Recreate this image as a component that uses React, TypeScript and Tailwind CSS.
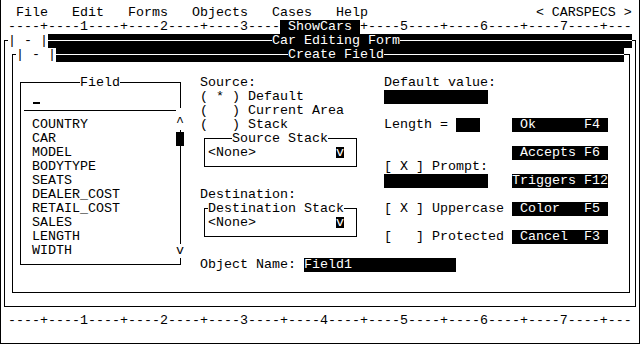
import type { ReactNode } from 'react'

// 80x24 text screen, 8x14 cells
const ruler = (from: number, to: number) => {
  let s = ''
  for (let c = from; c <= to; c++) s += c % 10 === 0 ? String(c / 10) : c % 5 === 0 ? '+' : '-'
  return s
}

const fields = ['COUNTRY', 'CAR', 'MODEL', 'BODYTYPE', 'SEATS', 'DEALER_COST', 'RETAIL_COST', 'SALES', 'LENGTH', 'WIDTH']

function Row({ children, className = '' }: { children?: ReactNode; className?: string }) {
  return <div className={`flex h-[14px] whitespace-pre ${className}`}>{children}</div>
}

function TitleBar({ title, className, leadClass }: { title: string; className: string; leadClass: string }) {
  return (
    <div className={`-mt-[7px] ml-[3px] flex h-[14px] whitespace-pre ${className}`}>
      <span className="w-[40px] bg-white">| - |</span>
      <div className="flex flex-1 items-start bg-black">
        <div className={`mt-[6px] h-px bg-white ${leadClass}`} />
        <span className="text-white">{title}</span>
        <div className="mt-[6px] h-px flex-1 bg-white" />
      </div>
    </div>
  )
}

function StackBox({ title, padClass }: { title: string; padClass: string }) {
  return (
    <div className="flex h-[42px]">
      <div className="ml-[4px] mt-[6px] h-[29px] w-[153px] border border-black">
        <div className={`-mt-[7px] flex h-[14px] whitespace-pre ${padClass}`}>
          <span className="bg-white">{title}</span>
        </div>
        <div className="flex h-[14px] pl-[3px]">
          <span className="w-[128px]">&lt;None&gt;</span>
          <span className="mt-[1px] h-[11px] w-[8px] bg-black leading-[11px] text-white">v</span>
        </div>
      </div>
    </div>
  )
}

function Btn({ children }: { children: string }) {
  return <div className="h-[14px] w-[96px] bg-black whitespace-pre text-white">{children}</div>
}

export default function App() {
  return (
    <div className="h-[344px] w-[640px] overflow-hidden bg-white pt-[6px] font-['Liberation_Mono',monospace] text-[13.333px] leading-[14px] text-black shadow-[inset_1px_0_0_#000,inset_-1px_0_0_#000,inset_0_-1px_0_#000]">
      {/* menu bar */}
      <div className="h-[14px] whitespace-pre">
        {'  File   Edit   Forms   Objects   Cases   Help' + ' '.repeat(21) + '< CARSPECS >'}
      </div>
      <Row>
        <span>{' ' + ruler(1, 34)}</span>
        <span className="bg-black text-white"> ShowCars </span>
        <span>{ruler(45, 78)}</span>
      </Row>

      {/* Car Editing Form window */}
      <div className="ml-[4px] mt-[6px] h-[267px] w-[632px] border border-black">
        <TitleBar title="Car Editing Form" className="w-[624px]" leadClass="w-[224px]" />

        {/* Create Field window */}
        <div className="ml-[7px] mt-[6px] h-[239px] w-[618px] border border-black">
          <TitleBar title="Create Field" className="w-[608px]" leadClass="w-[232px]" />

          <div className="pl-[3px]">
            <Row />
            <div className="flex">
              {/* Field list */}
              <div className="flex w-[184px]">
                <div className="ml-[4px] mt-[6px] h-[183px] w-[161px] border border-black">
                  <div className="-mt-[7px] flex h-[14px] pl-[59px]">
                    <span className="bg-white">Field</span>
                  </div>
                  <div className="flex h-[14px] pl-[12px]">
                    <div className="mt-[12px] h-[2px] w-[7px] bg-black" />
                  </div>
                  <div className="flex h-[14px]">
                    <div className="ml-[3px] mt-[6px] h-px w-[152px] bg-black" />
                    <div className="-mr-[4px] ml-auto mt-[4px] h-[10px] w-[8px] bg-white" />
                  </div>
                  {fields.map((f, i) => (
                    <div key={f} className="flex h-[14px]">
                      <span className="flex-1 pl-[11px]">{f}</span>
                      {i === 0 && <span className="-mr-[4px] w-[8px] -translate-y-[2px] bg-white">^</span>}
                      {i === 1 && <span className="-mr-[4px] w-[8px] bg-black" />}
                      {i === 9 && <span className="-mr-[4px] w-[8px] bg-white">v</span>}
                    </div>
                  ))}
                </div>
              </div>

              <div className="flex flex-col">
                <div className="flex">
                  {/* source / destination */}
                  <div className="w-[184px]">
                    <Row>Source:</Row>
                    <Row>( * ) Default</Row>
                    <Row>(   ) Current Area</Row>
                    <Row>(   ) Stack</Row>
                    <StackBox title="Source Stack" padClass="pl-[27px]" />
                    <Row />
                    <Row>Destination:</Row>
                    <StackBox title="Destination Stack" padClass="pl-[3px]" />
                  </div>

                  {/* attributes */}
                  <div className="w-[128px]">
                    <Row>Default value:</Row>
                    <Row><span className="w-[104px] bg-black" /></Row>
                    <Row />
                    <Row>
                      <span>Length = </span>
                      <span className="w-[24px] bg-black" />
                    </Row>
                    <Row />
                    <Row />
                    <Row>[ X ] Prompt:</Row>
                    <Row><span className="w-[104px] bg-black" /></Row>
                    <Row />
                    <Row>[ X ] Uppercase</Row>
                    <Row />
                    <Row>[   ] Protected</Row>
                  </div>

                  {/* buttons */}
                  <div className="flex flex-col gap-[14px] pt-[42px]">
                    <Btn>{' Ok      F4 '}</Btn>
                    <Btn>{' Accepts F6 '}</Btn>
                    <Btn>{'Triggers F12'}</Btn>
                    <Btn>{' Color   F5 '}</Btn>
                    <Btn>{' Cancel  F3 '}</Btn>
                  </div>
                </div>
                <Row />
                <Row>
                  <span>Object Name: </span>
                  <span className="w-[152px] bg-black text-white">Field1</span>
                </Row>
              </div>
            </div>
          </div>
        </div>
      </div>

      <Row className="mt-[7px]">{' ' + ruler(1, 78)}</Row>
    </div>
  )
}
